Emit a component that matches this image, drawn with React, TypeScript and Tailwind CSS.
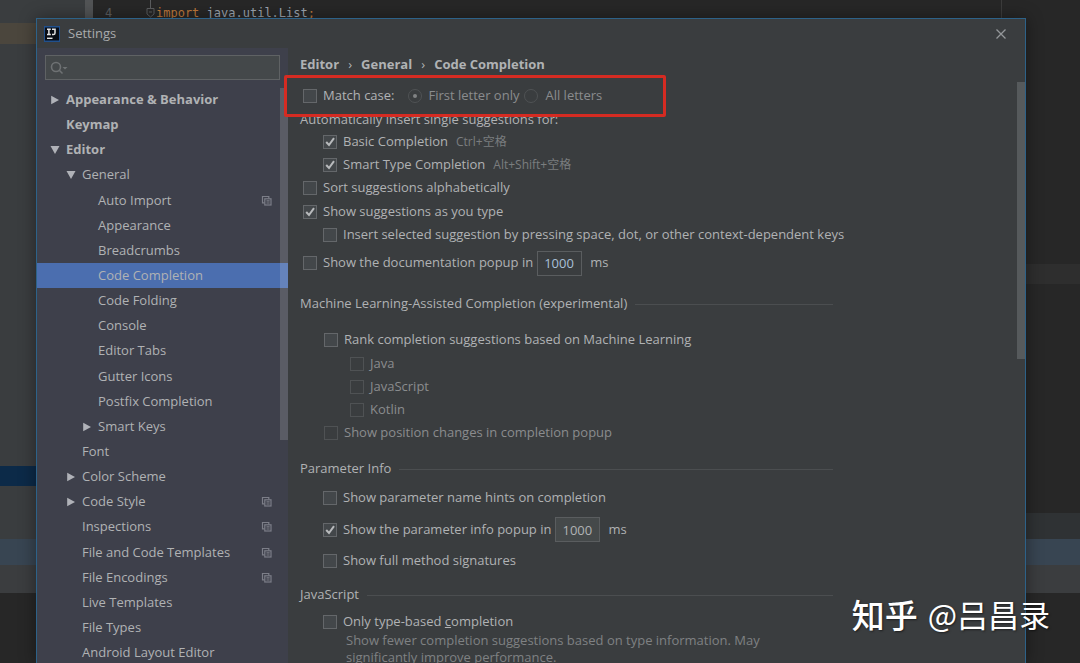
import clsx from "clsx";
import { FunctionComponent, PropsWithChildren, ReactNode, useState } from "react";

type TreeItem = {
  name: string;
  depth: 0 | 1 | 2;
  arrow?: "open" | "closed";
  perProject?: boolean;
  className?: string;
};

const tree: TreeItem[] = [
  { name: "Appearance & Behavior", depth: 0, arrow: "closed" },
  { name: "Keymap", depth: 0 },
  { name: "Editor", depth: 0, arrow: "open" },
  { name: "General", depth: 1, arrow: "open" },
  { name: "Auto Import", depth: 2, perProject: true, className: "mt-px" },
  { name: "Appearance", depth: 2 },
  { name: "Breadcrumbs", depth: 2 },
  { name: "Code Completion", depth: 2 },
  { name: "Code Folding", depth: 2 },
  { name: "Console", depth: 2 },
  { name: "Editor Tabs", depth: 2 },
  { name: "Gutter Icons", depth: 2, className: "mt-px" },
  { name: "Postfix Completion", depth: 2 },
  { name: "Smart Keys", depth: 2, arrow: "closed" },
  { name: "Font", depth: 1 },
  { name: "Color Scheme", depth: 1, arrow: "closed" },
  { name: "Code Style", depth: 1, arrow: "closed", perProject: true },
  { name: "Inspections", depth: 1, perProject: true },
  { name: "File and Code Templates", depth: 1, perProject: true, className: "mt-px" },
  { name: "File Encodings", depth: 1, perProject: true },
  { name: "Live Templates", depth: 1 },
  { name: "File Types", depth: 1 },
  { name: "Android Layout Editor", depth: 1 },
];

const indent = { 0: "pl-[13px]", 1: "pl-[29px]", 2: "pl-[45px]" };

const Arrow: FunctionComponent<{ state?: TreeItem["arrow"] }> = ({ state }) => (
  <svg viewBox="0 0 16 12" className="h-3 w-4 shrink-0 fill-[#b0b2b8]">
    {state === "closed" && <path d="M1.2 1.8 L9 6 L1.2 10.2 Z" />}
    {state === "open" && <path d="M0.5 2 L9.5 2 L5 10 Z" />}
  </svg>
);

const ProjectIcon: FunctionComponent = () => (
  <svg
    viewBox="0 0 12 12"
    className="h-3 w-3 fill-none stroke-[#7c7e88]"
    strokeWidth="1.2"
  >
    <path d="M3.5 7.8 H1.5 V1.5 H7.8 V3.5" />
    <rect x="3.8" y="3.8" width="6.2" height="6.2" />
    <path d="M5.5 5.9 H8.6 M5.5 8 H8.6" />
  </svg>
);

const Sidebar: FunctionComponent = () => {
  const [selected, setSelected] = useState("Code Completion");

  return (
    <nav className="relative w-[251px] shrink-0 overflow-hidden bg-[#3e404b]">
      <div className="px-2 pt-[7px] pb-[7px]">
        <div className="flex h-[25px] items-center border border-[#5f6264] bg-[#44484a] pl-1">
          <svg
            viewBox="0 0 20 16"
            className="h-4 w-5 shrink-0 fill-none stroke-[#6e7173]"
            strokeWidth="1.6"
          >
            <circle cx="6" cy="7" r="4.5" />
            <path d="M9.3 10.3 L12.5 13.5" />
            <path d="M12.5 7 H17.5 L15 9.5 Z" className="fill-[#6e7173] stroke-none" />
          </svg>
          <input
            aria-label="Search settings"
            className="w-full min-w-0 bg-transparent text-[#b4b6b8] outline-none"
          />
        </div>
      </div>
      <ul>
        {tree.map((item) => (
          <li key={item.name} className={item.className}>
            <button
              onClick={() => setSelected(item.name)}
              className={clsx(
                "flex h-[25px] w-full items-center pr-[15px] text-left",
                indent[item.depth],
                item.depth === 0 && "font-bold",
                item.name === selected ? "bg-[#4b6eaf]" : "",
              )}
            >
              <Arrow state={item.arrow} />
              <span className="flex-1 whitespace-nowrap">{item.name}</span>
              {item.perProject && <ProjectIcon />}
            </button>
          </li>
        ))}
      </ul>
      <div className="absolute top-10 right-0 h-[352px] w-2 bg-white/15" />
    </nav>
  );
};

type CheckProps = PropsWithChildren<{
  checked?: boolean;
  disabled?: boolean;
  className?: string;
}>;

const Check: FunctionComponent<CheckProps> = ({
  checked,
  disabled,
  className,
  children,
}) => (
  <label
    className={clsx(
      "flex items-center gap-1.5 whitespace-nowrap",
      disabled && "text-[#8a8c8e]",
      className,
    )}
  >
    <span className="grid h-3.5 w-3.5 shrink-0">
      <input
        type="checkbox"
        defaultChecked={checked}
        disabled={disabled}
        className="peer col-start-1 row-start-1 h-3.5 w-3.5 appearance-none border border-[#64676a] bg-[#43474a] disabled:border-[#4f5254] disabled:bg-transparent"
      />
      <svg
        viewBox="0 0 14 14"
        className="pointer-events-none invisible col-start-1 row-start-1 h-3.5 w-3.5 fill-none stroke-[#b8babc] peer-checked:visible"
        strokeWidth="2"
      >
        <path d="M3.2 7 L6 10 L11 3.2" />
      </svg>
    </span>
    <span>{children}</span>
  </label>
);

const Radio: FunctionComponent<CheckProps> = ({ checked, children }) => (
  <label className="flex items-center gap-1.5 whitespace-nowrap text-[#8a8c8e]">
    <span className="grid h-4 w-4 shrink-0 place-items-center">
      <input
        type="radio"
        name="match-case"
        defaultChecked={checked}
        disabled
        className="peer col-start-1 row-start-1 h-3.5 w-3.5 appearance-none rounded-full border border-[#4f5254]"
      />
      <span className="invisible col-start-1 row-start-1 h-1 w-1 rounded-full bg-[#808284] peer-checked:visible" />
    </span>
    <span>{children}</span>
  </label>
);

const Delay: FunctionComponent<{ label: string; className?: string }> = ({
  label,
  className,
}) => (
  <>
    <input
      aria-label={label}
      defaultValue="1000"
      className={clsx(
        "ml-1 h-[25px] w-[45px] border border-[#5a5d5f] pl-1.5 outline-none",
        className,
      )}
    />
    <span className="ml-2">ms</span>
  </>
);

const Heading: FunctionComponent<{ children: ReactNode }> = ({ children }) => (
  <h2 className="flex h-6 items-center gap-2 whitespace-nowrap">
    {children}
    <span className="h-px flex-1 bg-[#4b4e50]" />
  </h2>
);

const CodeCompletion: FunctionComponent = () => (
  <main className="min-w-0 flex-1 pl-3">
    <div className="flex h-[27px] items-center pt-1.5 font-bold">
      <span>Editor</span>
      <span className="w-[22px] text-center font-normal">›</span>
      <span>General</span>
      <span className="w-[22px] text-center font-normal">›</span>
      <span>Code Completion</span>
    </div>
    <div className="relative z-10 -ml-4 flex h-[42px] w-[382px] items-center rounded-xs border-3 border-[#d52b22] bg-[#3a3d3f] pl-4">
      <Check>Match case:</Check>
      <div className="ml-3 flex gap-1">
        <Radio checked>First letter only</Radio>
        <Radio>All letters</Radio>
      </div>
    </div>
    <div className="w-[533px]">
      <p className="-mt-2 h-[21px] leading-5">
        Automatically insert single suggestions for:
      </p>
      <div className="flex h-[23px] items-center pl-[23px]">
        <Check checked>Basic Completion</Check>
        <span className="ml-2 text-xs text-[#7b7d7f]">Ctrl+空格</span>
      </div>
      <div className="flex h-[23px] items-center pl-[23px]">
        <Check checked>Smart Type Completion</Check>
        <span className="ml-2 text-xs text-[#7b7d7f]">Alt+Shift+空格</span>
      </div>
      <Check className="h-6 pl-[3px]">Sort suggestions alphabetically</Check>
      <Check checked className="h-[23px] pl-[3px]">
        Show suggestions as you type
      </Check>
      <Check className="h-[23px] pl-[23px]">
        Insert selected suggestion by pressing space, dot, or other
        context-dependent keys
      </Check>
      <div className="flex h-[34px] items-center pl-[3px]">
        <Check>Show the documentation popup in</Check>
        <Delay
          label="Documentation popup delay"
          className="bg-transparent text-[#a9c0d8]"
        />
      </div>

      <div className="mt-3 flex flex-col">
        <Heading>Machine Learning-Assisted Completion (experimental)</Heading>
        <Check className="mt-3 h-6 pl-6">
          Rank completion suggestions based on Machine Learning
        </Check>
        <Check disabled className="h-[23px] pl-[50px]">
          Java
        </Check>
        <Check disabled className="h-[23px] pl-[50px]">
          JavaScript
        </Check>
        <Check disabled className="h-[23px] pl-[50px]">
          Kotlin
        </Check>
        <Check disabled className="h-6 pl-6">
          Show position changes in completion popup
        </Check>
      </div>

      <div className="mt-3 flex flex-col">
        <Heading>Parameter Info</Heading>
        <Check className="mt-px h-8 pl-[23px]">
          Show parameter name hints on completion
        </Check>
        <div className="flex h-[31px] items-center pl-[23px]">
          <Check checked>Show the parameter info popup in</Check>
          <Delay label="Parameter info popup delay" className="bg-[#45494a]" />
        </div>
        <Check className="h-8 pl-[23px]">Show full method signatures</Check>
      </div>

      <div className="mt-1.5 flex flex-col">
        <Heading>JavaScript</Heading>
        <Check className="mt-1 h-[22px] pl-[23px]">
          Only type-based <u>c</u>ompletion
        </Check>
        <p className="-mt-px pl-[46px] leading-[17px] text-[#7f8183]">
          Show fewer completion suggestions based on type information. May
          <br />
          significantly improve performance.
        </p>
      </div>
    </div>
  </main>
);

const Settings: FunctionComponent = () => (
  <section className="flex min-w-0 flex-1 flex-col border-x border-t border-[#2d6289] bg-[#3a3d3f] shadow-[0_0_16px_rgba(0,0,0,0.4)]">
    <header className="flex h-[29px] shrink-0 items-center gap-2 pr-[19px] pl-[7px] text-[#a8aaac]">
      <svg viewBox="0 0 16 16" className="h-4 w-4">
        <rect width="16" height="16" fill="#21508c" />
        <rect x="1" y="1.5" width="14" height="13" fill="#080c14" />
        <path
          d="M3 3.2 H6.8 M4.9 3.2 V8.6 M3 8.6 H6.8 M8 3.2 H11.8 M11 3.2 V7 Q11 8.6 9.4 8.6 H8"
          fill="none"
          stroke="#e4e4e4"
          strokeWidth="1.5"
        />
        <path d="M3 12.3 H8.5" stroke="#e4e4e4" strokeWidth="1.4" />
      </svg>
      <h1 className="flex-1">Settings</h1>
      <button aria-label="Close">
        <svg
          viewBox="0 0 10 10"
          className="h-2.5 w-2.5 stroke-[#94979a]"
          strokeWidth="1.3"
        >
          <path d="M0.5 0.5 L9.5 9.5 M9.5 0.5 L0.5 9.5" />
        </svg>
      </button>
    </header>
    <div className="relative flex min-h-0 flex-1">
      <Sidebar />
      <CodeCompletion />
      <div className="absolute top-[34px] right-0 h-[277px] w-2 bg-[#565a5c]" />
    </div>
  </section>
);

const IdeBackground: FunctionComponent = () => (
  <div className="col-start-1 row-start-1 flex min-h-0 flex-col">
    <div className="flex h-[513px]">
      <div className="flex w-[85px] flex-col bg-[#3a3d3f]">
        <div className="mt-[23px] h-[21px] bg-[#4b463d]" />
        <div className="mt-[422px] h-5 bg-[#0c2a48]" />
      </div>
      <div className="w-2 bg-[#525456]" />
      <div className="flex min-w-0 flex-1 flex-col">
        <div className="flex h-[264px]">
          <pre className="flex flex-1 border-r border-[#3c3c3c] font-['DejaVu_Sans_Mono',monospace] text-[12px] leading-[26px] text-[#9da5b0]">
            <span className="w-[53px] pl-3 text-[#5b5d5f]">4</span>
            <svg
              viewBox="0 0 10 24"
              className="h-6 w-2.5 fill-none stroke-[#5b5d5f]"
            >
              <path d="M4.5 0 V8 M1 8.5 H8 V14 L4.5 17 L1 14 Z M3 12 H6" />
            </svg>
            <span className="text-[#c07a3c]">import</span>
            <span> java.util.List</span>
            <span className="text-[#c07a3c]">;</span>
          </pre>
          <div className="w-[78px]" />
        </div>
        <div className="h-5 bg-[#2e2e2e]" />
      </div>
    </div>
    <div className="flex h-[26px]">
      <div className="w-10 bg-[#3a3d3f]" />
      <div className="flex-1 bg-[#2f3234]" />
    </div>
    <div className="h-[26px] bg-[#384552]" />
    <div className="h-7 bg-[#3b3d3f]" />
  </div>
);

export default function App() {
  return (
    <div className="relative grid h-screen grid-cols-1 grid-rows-1 overflow-hidden bg-[#272727] font-['Open_Sans','Noto_Sans_CJK_SC',sans-serif] text-[13px] text-[#b0b2b4]">
      <IdeBackground />
      <div className="col-start-1 row-start-1 flex min-h-0 pt-[18px] pr-[54px] pl-9">
        <Settings />
      </div>
      <div className="absolute right-[30px] bottom-[27px] z-20 flex gap-2.5 font-['Noto_Sans_CJK_SC',sans-serif] text-[31px] leading-[44px] whitespace-nowrap text-white [text-shadow:1px_1px_2px_rgba(0,0,0,0.5)]">
        <span className="text-[33px] font-medium">知乎</span>
        <span>@吕昌录</span>
      </div>
    </div>
  );
}
